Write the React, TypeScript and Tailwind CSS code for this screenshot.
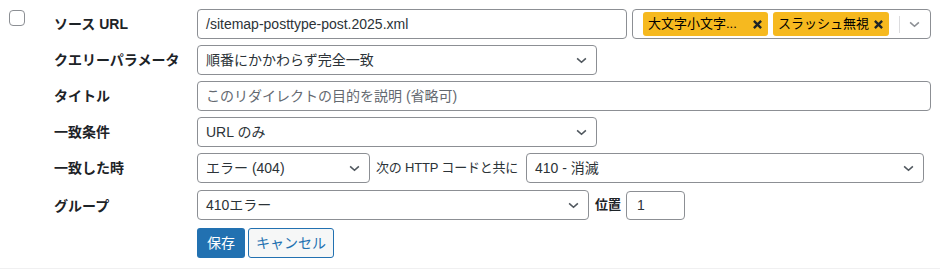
import React from 'react';

const font = { fontFamily: '"Liberation Sans", "Noto Sans CJK JP", sans-serif' };

function Chevron({ className = '' }: { className?: string }) {
  return (
    <svg viewBox="0 0 12 8" className={`w-[11px] h-[7px] shrink-0 ${className}`} fill="none">
      <path d="M1 1.5 L6 6 L11 1.5" stroke="currentColor" strokeWidth="1.8" />
    </svg>
  );
}

function Select({ value, width }: { value: string; width: string }) {
  return (
    <div
      className={`${width} shrink-0 h-[30px] flex items-center justify-between pl-[8px] pr-[9px] border border-[#8c8f94] rounded-[4px] bg-white text-[14px] text-[#2c3338] whitespace-nowrap`}
    >
      <span>{value}</span>
      <Chevron className="text-[#50575e]" />
    </div>
  );
}

function Tag({ label, width }: { label: string; width: string }) {
  return (
    <div
      className={`${width} shrink-0 h-[24px] flex items-center justify-between pl-[5px] pr-[6px] rounded-[3px] bg-[#f6b91f] text-[13px] text-black whitespace-nowrap`}
    >
      <span>{label}</span>
      <svg viewBox="0 0 10 10" className="w-[9px] h-[9px] shrink-0">
        <path d="M1 1 L9 9 M9 1 L1 9" stroke="#1d2327" strokeWidth="2.6" />
      </svg>
    </div>
  );
}

function Label({ children }: { children: React.ReactNode }) {
  return (
    <div className="h-[30px] flex items-center text-[14px] font-bold text-[#1d2327] whitespace-nowrap">{children}</div>
  );
}

export default function App() {
  return (
    <div style={font} className="w-[940px] h-[269px] bg-white border-b border-[#f0f0f1] flex">
      {/* checkbox column */}
      <div className="w-[54px] pl-[9px] pt-[10px]">
        <div className="w-[16px] h-[16px] border border-[#8c8f94] rounded-[4px] bg-white" />
      </div>

      <div className="flex-1 pr-[9px] pt-[9px] grid grid-cols-[143px_1fr] auto-rows-[30px] gap-y-[6px]">
        <Label>ソース URL</Label>
        <div className="flex gap-[5px]">
          <div className="w-[430px] h-[30px] flex items-center px-[8px] border border-[#8c8f94] rounded-[4px] text-[14px] text-[#2c3338]">
            /sitemap-posttype-post.2025.xml
          </div>
          <div className="flex-1 h-[30px] flex items-center pl-[10px] pr-[10px] border border-[#8c8f94] rounded-[4px]">
            <div className="flex gap-[5px] flex-1">
              <Tag label="大文字小文字..." width="w-[125px]" />
              <Tag label="スラッシュ無視" width="w-[116px]" />
            </div>
            <div className="w-px h-[17px] bg-[#dcdcde] mr-[9px]" />
            <Chevron className="text-[#8c8f94]" />
          </div>
        </div>

        <Label>クエリーパラメータ</Label>
        <Select value="順番にかかわらず完全一致" width="w-[400px]" />

        <Label>タイトル</Label>
        <div className="h-[30px] flex items-center px-[8px] border border-[#8c8f94] rounded-[4px] text-[14px] text-[#646970]">
          このリダイレクトの目的を説明 (省略可)
        </div>

        <Label>一致条件</Label>
        <Select value="URL のみ" width="w-[400px]" />

        <Label>一致した時</Label>
        <div className="flex items-center">
          <Select value="エラー (404)" width="w-[173px]" />
          <span className="w-[156px] pl-[6px] text-[13px] tracking-[-0.2px] text-[#2c3338] whitespace-nowrap">
            次の HTTP コードと共に
          </span>
          <Select value="410 - 消滅" width="w-[398px]" />
        </div>

        <div className="mt-[2px]">
          <Label>グループ</Label>
        </div>
        <div className="mt-[2px] flex items-center">
          <Select value="410エラー" width="w-[392px]" />
          <span className="w-[37px] pl-[6px] text-[13px] font-bold text-[#1d2327] whitespace-nowrap">位置</span>
          <div className="w-[59px] h-[29px] flex items-center px-[10px] border border-[#8c8f94] rounded-[4px] text-[14px] text-[#2c3338]">
            1
          </div>
        </div>

        <div />
        <div className="mt-[3px] flex gap-[3px]">
          <button className="w-[48px] h-[30px] rounded-[3px] bg-[#2271b1] text-white text-[14px]">保存</button>
          <button className="w-[86px] h-[30px] rounded-[3px] border border-[#2271b1] bg-[#f6f7f7] text-[#2271b1] text-[14px]">
            キャンセル
          </button>
        </div>
      </div>
    </div>
  );
}
